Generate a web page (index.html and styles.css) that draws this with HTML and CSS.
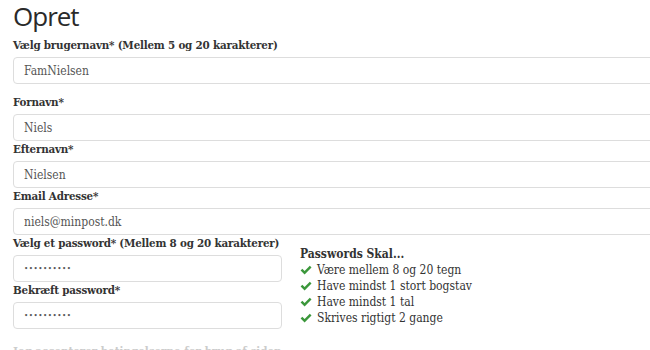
FILE: index.html
```html
<!DOCTYPE html>
<html lang="da">
<head>
    <meta charset="UTF-8">
    <meta name="viewport" content="width=device-width, initial-scale=1.0">
    <title>Opret</title>
    <link rel="stylesheet" href="styles.css">
</head>
<body>

    <div class="page">
        <h1>Opret</h1>

        <div class="form-group first">
            <label for="brugernavn">Vælg brugernavn* (Mellem 5 og 20 karakterer)</label>
            <input type="text" id="brugernavn" class="wide" value="FamNielsen">
        </div>
        <div class="form-group">
            <label for="fornavn">Fornavn*</label>
            <input type="text" id="fornavn" class="wide" value="Niels">
        </div>
        <div class="form-group">
            <label for="efternavn">Efternavn*</label>
            <input type="text" id="efternavn" class="wide" value="Nielsen">
        </div>
        <div class="form-group">
            <label for="email">Email Adresse*</label>
            <input type="text" id="email" class="wide" value="niels@minpost.dk">
        </div>

        <div class="password-row">
            <div class="password-fields">
                <div class="form-group">
                    <label for="password">Vælg et password* (Mellem 8 og 20 karakterer)</label>
                    <input type="password" id="password" value="Niels12345">
                </div>
                <div class="form-group">
                    <label for="password2">Bekræft password*</label>
                    <input type="password" id="password2" value="Niels12345">
                </div>
            </div>
            <div class="rules">
                <div class="rules-title">Passwords Skal...</div>
                <ul>
                    <li><svg class="check" viewBox="0 0 12 10"><path d="M0.6 5.4 L2.3 3.7 L4.6 6 L9.8 0.8 L11.5 2.5 L4.6 9.4 Z"/></svg>Være mellem 8 og 20 tegn</li>
                    <li><svg class="check" viewBox="0 0 12 10"><path d="M0.6 5.4 L2.3 3.7 L4.6 6 L9.8 0.8 L11.5 2.5 L4.6 9.4 Z"/></svg>Have mindst 1 stort bogstav</li>
                    <li><svg class="check" viewBox="0 0 12 10"><path d="M0.6 5.4 L2.3 3.7 L4.6 6 L9.8 0.8 L11.5 2.5 L4.6 9.4 Z"/></svg>Have mindst 1 tal</li>
                    <li><svg class="check" viewBox="0 0 12 10"><path d="M0.6 5.4 L2.3 3.7 L4.6 6 L9.8 0.8 L11.5 2.5 L4.6 9.4 Z"/></svg>Skrives rigtigt 2 gange</li>
                </ul>
            </div>
        </div>

        <p class="note">Jeg accepterer betingelserne for brug af siden</p>
    </div>

</body>
</html>
```

FILE: styles.css
```css
html, body {
    overflow: hidden;
}
body {
    margin: 0;
    background-color: white;
    font-family: "DejaVu Serif", serif;
    font-stretch: condensed;
    color: #333;
}
.page {
    padding: 0 13px;
}
h1 {
    margin: 0 0 5px 0;
    font-family: "Open Sans", sans-serif;
    font-stretch: normal;
    font-weight: normal;
    font-size: 26px;
    letter-spacing: -1px;
    line-height: 32px;
    color: #2a2a2a;
}
.form-group.first {
    margin-bottom: 10px;
}
label {
    display: block;
    font-weight: bold;
    font-size: 11.5px;
    letter-spacing: -0.2px;
    line-height: 16px;
    margin-bottom: 4px;
    white-space: nowrap;
    color: #333;
}
input {
    display: block;
    box-sizing: border-box;
    height: 27px;
    padding: 0 10px;
    border: 1px solid #ddd;
    border-radius: 4px;
    font-family: "DejaVu Serif", serif;
    font-stretch: condensed;
    font-size: 12px;
    color: #555;
    background-color: white;
}
input.wide {
    width: 680px;
}
input[type="password"] {
    font-size: 8px;
    letter-spacing: 0.5px;
}
.password-row {
    display: flex;
    gap: 18px;
}
.password-fields {
    width: 269px;
    flex-shrink: 0;
}
.password-fields input {
    width: 100%;
}
.rules {
    margin-top: 11px;
    font-size: 12px;
    line-height: 16px;
}
.rules-title {
    font-weight: bold;
}
.rules ul {
    margin: 0;
    padding: 0;
    list-style: none;
}
.rules li {
    display: flex;
    align-items: center;
}
.check {
    width: 12px;
    height: 10px;
    margin-right: 5px;
    fill: #3b973b;
}
.note {
    margin: 15px 0 0 0;
    font-weight: bold;
    font-size: 11.5px;
    color: #ccc;
}
```
